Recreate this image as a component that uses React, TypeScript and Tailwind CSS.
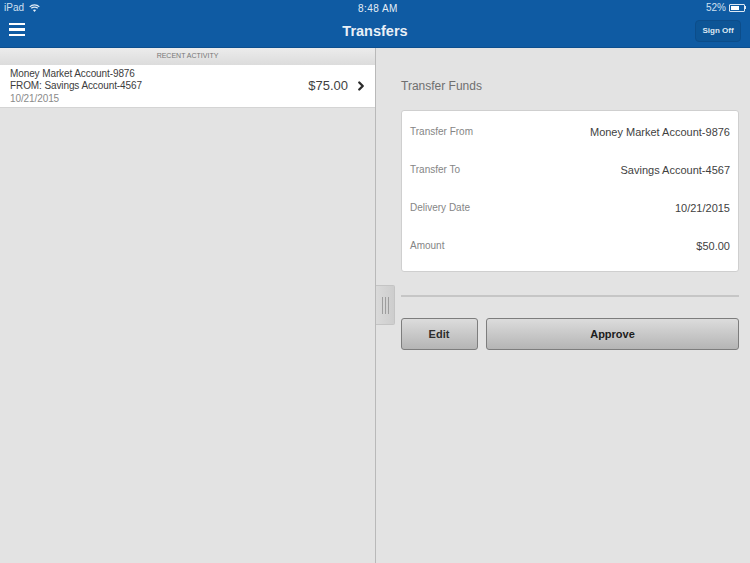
import { ChevronRight } from 'lucide-react';

const rows = [
  { label: 'Transfer From', value: 'Money Market Account-9876' },
  { label: 'Transfer To', value: 'Savings Account-4567' },
  { label: 'Delivery Date', value: '10/21/2015' },
  { label: 'Amount', value: '$50.00' },
];

export default function App() {
  return (
    <div className="w-[750px] h-[563px] overflow-hidden flex flex-col bg-[#e3e3e3] font-['Liberation_Sans',Arial,sans-serif]">
      {/* header */}
      <div className="h-[48px] bg-[#0f5ba3] border-b border-[#0d4f8e] flex flex-col text-white shrink-0">
        <div className="h-[15px] pl-[4px] pr-[4px] flex items-center justify-between text-[10px] text-[#cfe0f0] relative">
          <div className="flex items-center gap-[5px]">
            <span>iPad</span>
            <svg width="11" height="8" viewBox="0 0 11 8" fill="none" stroke="#e4edf6" strokeWidth="1.2">
              <path d="M0.7 2.8C3.2 0.3 7.8 0.3 10.3 2.8" />
              <path d="M2.3 4.3C4 2.7 7 2.7 8.7 4.3" />
              <path d="M5.5 8L3.9 5.9C4.8 5.2 6.2 5.2 7.1 5.9Z" fill="#e4edf6" stroke="none" />
            </svg>
          </div>
          <span className="absolute left-[358px] top-[1px] tracking-[0.45px] text-[#e4edf6]">8:48 AM</span>
          <div className="flex items-center gap-[3px]">
            <span className="text-[10px]">52%</span>
            <div className="w-[16px] h-[8px] border border-[#dce8f4] rounded-[1px] p-[1px] flex">
              <div className="w-[8px] bg-white" />
            </div>
            <div className="w-[1px] h-[3px] -ml-[3px] bg-[#dce8f4]" />
          </div>
        </div>
        <div className="flex-1 relative flex items-center justify-between pl-[9px] pr-[9px]">
          <div className="flex flex-col gap-[3px] mb-[3px]">
            <div className="w-[16px] h-[2.5px] bg-white" />
            <div className="w-[16px] h-[2.5px] bg-white" />
            <div className="w-[16px] h-[2.5px] bg-white" />
          </div>
          <span className="absolute left-0 right-0 top-[6px] text-center text-[14.5px] leading-[20px] font-bold text-[#e9f0f7]">Transfers</span>
          <div className="w-[46px] h-[22px] mb-[1px] rounded-[4px] bg-[#0d5596] border border-[#0c4d8a] flex items-center justify-center text-[8px] font-bold text-[#dfe9f3]">
            Sign Off
          </div>
        </div>
      </div>

      <div className="flex-1 flex relative">
        {/* left pane */}
        <div className="w-[375px] shrink-0 flex flex-col">
          <div className="h-[17px] bg-gradient-to-b from-[#ececec] to-[#dcdcdc] flex items-center justify-center text-[7px] text-[#777]">
            RECENT ACTIVITY
          </div>
          <div className="h-[43px] bg-white border-b border-[#d4d4d4] flex items-center justify-between pl-[10px] pr-[8px]">
            <div className="flex flex-col pt-[1px] text-[10px] leading-[12.5px] tracking-[-0.1px] text-[#3c3c3c]">
              <span>Money Market Account-9876</span>
              <span>FROM: Savings Account-4567</span>
              <span className="text-[#8a8a8a]">10/21/2015</span>
            </div>
            <div className="flex items-center gap-[6px]">
              <span className="text-[13px] text-[#3f3f3f]">$75.00</span>
              <ChevronRight size={14} strokeWidth={4} className="text-[#2b2b2b] -mr-[1px]" />
            </div>
          </div>
        </div>

        {/* right pane */}
        <div className="flex-1 border-l border-[#b9b9b9] pl-[25px] pr-[11px] flex flex-col">
          <div className="h-[62px] pt-[30px] text-[12px] leading-[16px] text-[#6f6f6f]">Transfer Funds</div>
          <div className="h-[162px] bg-white border border-[#cfcfcf] rounded-[3px] pl-[8px] pr-[8px] pt-[2px] flex flex-col">
            {rows.map((r) => (
              <div key={r.label} className="h-[38px] flex items-center justify-between">
                <span className="text-[10px] text-[#858585] mb-[1px]">{r.label}</span>
                <span className="text-[11px] text-[#3f3f3f] mt-[1px]">{r.value}</span>
              </div>
            ))}
          </div>
          <div className="mt-[23px] h-[2px] bg-[#c6c6c6]" />
          <div className="mt-[21px] flex gap-[8px]">
            <div className="w-[77px] h-[32px] rounded-[3px] border border-[#7d7d7d] bg-gradient-to-b from-[#dcdcdc] to-[#b5b5b5] flex items-center justify-center text-[11px] font-bold text-[#2e2e2e] pr-[1px]">
              Edit
            </div>
            <div className="flex-1 h-[32px] rounded-[3px] border border-[#7d7d7d] bg-gradient-to-b from-[#dcdcdc] to-[#b5b5b5] flex items-center justify-center text-[11px] font-bold text-[#1c1c1c]">
              Approve
            </div>
          </div>
        </div>

        {/* drag handle */}
        <div className="absolute left-[376px] top-[237px] w-[19px] h-[40px] rounded-r-[2px] bg-gradient-to-r from-[#dadada] to-[#cdcdcd] border border-l-0 border-[#c4c4c4] flex items-center justify-center gap-[2px]">
          <div className="w-[1px] h-[17px] bg-[#9d9d9d]" />
          <div className="w-[1px] h-[17px] bg-[#9d9d9d]" />
          <div className="w-[1px] h-[17px] bg-[#9d9d9d]" />
        </div>
      </div>
    </div>
  );
}
